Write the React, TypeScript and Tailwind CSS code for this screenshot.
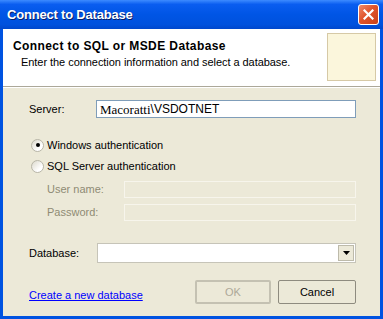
import React from "react";

export default function App() {
  const sans = { fontFamily: '"Liberation Sans", Arial, sans-serif' };
  return (
    <div className="w-[383px] h-[319px] flex flex-col bg-[#0053E1]" style={sans}>
      {/* Title bar */}
      <div className="h-[29px] shrink-0 flex items-center justify-between pl-[7px] pr-[4px] bg-[linear-gradient(180deg,#3D8BFF_0%,#0A5DF0_15%,#0055E5_50%,#0051DD_85%,#0047CC_100%)]">
        <span className="text-white font-bold text-[13px] tracking-[-0.2px] [text-shadow:1px_1px_0_#0A1F66]">
          Connect to Database
        </span>
        <div className="w-[21px] h-[21px] rounded-[3px] border border-white bg-[linear-gradient(135deg,#F08A6A_0%,#E0542C_45%,#C8401A_100%)] flex items-center justify-center">
          <svg width="11" height="11" viewBox="0 0 11 11">
            <path d="M1.5 1.5 L9.5 9.5 M9.5 1.5 L1.5 9.5" stroke="white" strokeWidth="2.2" strokeLinecap="square" />
          </svg>
        </div>
      </div>

      {/* Client area */}
      <div className="flex-1 mx-[3px] mb-[3px] bg-[#ECE9D8] flex flex-col">
        {/* Header */}
        <div className="h-[57px] shrink-0 bg-white flex justify-between pl-[10px] pr-[4px]">
          <div className="flex flex-col pt-[10px]">
            <span className="text-black font-bold text-[12px] leading-[14px] tracking-[0.4px]">
              Connect to SQL or MSDE Database
            </span>
            <span className="text-black text-[11px] leading-[13px] mt-[3px] ml-[8px] tracking-[-0.05px]">
              Enter the connection information and select a database.
            </span>
          </div>
          <div className="w-[49px] h-[48px] mt-[4px] bg-[#FBF6DC] border border-[#D6C9A6]" />
        </div>
        <div className="h-px bg-[#ACA899]" />
        <div className="h-px bg-white" />

        {/* Body */}
        <div className="flex flex-col pl-[26px] pr-[24px] pt-[12px] text-[11px] text-black">
          {/* Server */}
          <div className="flex items-center h-[18px]">
            <span className="w-[67px]">Server:</span>
            <div className="flex-1 h-[18px] bg-white border-t border-l border-[#7F9DB9] border-r border-b flex items-center pl-[3px]">
              <span className="text-[13px] leading-none" style={{ fontFamily: '"Liberation Serif", serif' }}>Macoratti</span>
              <span className="text-[12px] leading-none">\VSDOTNET</span>
            </div>
          </div>

          {/* Radio 1 */}
          <div className="flex items-center h-[14px] mt-[20px] ml-[2px]">
            <div className="w-[13px] h-[13px] rounded-full border border-[#B8B6A8] bg-[linear-gradient(135deg,#DCD9CC_0%,#FFFFFF_70%)] flex items-center justify-center">
              <div className="w-[4px] h-[4px] rounded-full bg-black" />
            </div>
            <span className="ml-[3px]">Windows authentication</span>
          </div>

          {/* Radio 2 */}
          <div className="flex items-center h-[14px] mt-[7px] ml-[2px]">
            <div className="w-[13px] h-[13px] rounded-full border border-[#B8B6A8] bg-[linear-gradient(135deg,#DCD9CC_0%,#FFFFFF_70%)]" />
            <span className="ml-[3px]">SQL Server authentication</span>
          </div>

          {/* User name */}
          <div className="flex items-center h-[17px] mt-[8px] ml-[18px]">
            <span className="w-[77px] text-[#8F8B74]">User name:</span>
            <div className="flex-1 h-[17px] border border-[#F7F5EC] bg-[#ECE9D8]" />
          </div>

          {/* Password */}
          <div className="flex items-center h-[17px] mt-[6px] ml-[18px]">
            <span className="w-[77px] text-[#8F8B74]">Password:</span>
            <div className="flex-1 h-[17px] border border-[#F7F5EC] bg-[#ECE9D8]" />
          </div>

          {/* Database */}
          <div className="flex items-center h-[20px] mt-[22px]">
            <span className="w-[68px]">Database:</span>
            <div className="flex-1 h-[20px] bg-white border border-[#C6C4B8] flex justify-end p-px">
              <div className="w-[16px] h-full bg-[#ECE9D8] border border-[#BDBAAA] flex items-center justify-center">
                <svg width="7" height="4" viewBox="0 0 7 4">
                  <path d="M0 0 H7 L3.5 4 Z" fill="black" />
                </svg>
              </div>
            </div>
          </div>

          {/* Bottom row */}
          <div className="flex items-center mt-[17px]">
            <span className="text-[#0000FF] underline mt-[7px]">Create a new database</span>
            <div className="flex-1" />
            <div className="w-[76px] h-[24px] border-2 border-[#C4C1B2] rounded-[2px] flex items-center justify-center text-[#ACA899]">
              OK
            </div>
            <div className="w-[78px] h-[24px] ml-[7px] border border-[#8E8B7F] rounded-[2px] flex items-center justify-center text-black">
              Cancel
            </div>
          </div>
        </div>
      </div>
    </div>
  );
}
